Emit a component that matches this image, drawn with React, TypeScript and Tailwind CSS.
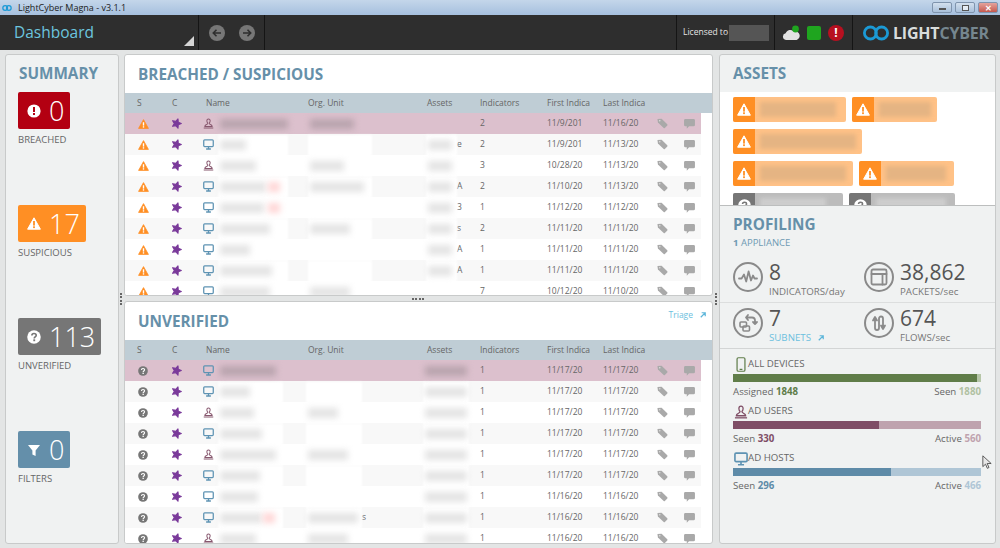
import type { ReactNode } from "react";

type Row = {
  s: "warn" | "q";
  kind: "user" | "host";
  name: number;
  red?: boolean;
  org?: number;
  orgEnd?: string;
  asset?: boolean;
  assetEnd?: string;
  ind: number;
  first: string;
  last: string;
};

const breached: Row[] = [
  { s: "warn", kind: "user", name: 68, org: 44, ind: 2, first: "11/9/201", last: "11/16/20" },
  { s: "warn", kind: "host", name: 26, asset: true, assetEnd: "e", ind: 2, first: "11/9/201", last: "11/13/20" },
  { s: "warn", kind: "user", name: 36, org: 34, asset: true, ind: 3, first: "10/28/20", last: "11/13/20" },
  { s: "warn", kind: "host", name: 46, red: true, org: 54, asset: true, assetEnd: "A", ind: 2, first: "11/10/20", last: "11/13/20" },
  { s: "warn", kind: "host", name: 44, red: true, asset: true, assetEnd: "3", ind: 1, first: "11/12/20", last: "11/12/20" },
  { s: "warn", kind: "host", name: 50, org: 40, asset: true, assetEnd: "s", ind: 2, first: "11/11/20", last: "11/11/20" },
  { s: "warn", kind: "host", name: 30, asset: true, assetEnd: "A", ind: 1, first: "11/11/20", last: "11/11/20" },
  { s: "warn", kind: "host", name: 52, asset: true, assetEnd: "A", ind: 1, first: "11/11/20", last: "11/11/20" },
  { s: "warn", kind: "host", name: 50, org: 40, ind: 7, first: "10/12/20", last: "11/10/20" },
];

const unverified: Row[] = [
  { s: "q", kind: "host", name: 56, asset: true, ind: 1, first: "11/17/20", last: "11/17/20" },
  { s: "q", kind: "host", name: 30, asset: true, ind: 1, first: "11/17/20", last: "11/17/20" },
  { s: "q", kind: "user", name: 34, org: 30, asset: true, ind: 1, first: "11/17/20", last: "11/17/20" },
  { s: "q", kind: "host", name: 42, asset: true, ind: 1, first: "11/17/20", last: "11/17/20" },
  { s: "q", kind: "user", name: 56, org: 40, asset: true, ind: 1, first: "11/17/20", last: "11/17/20" },
  { s: "q", kind: "host", name: 40, asset: true, ind: 1, first: "11/17/20", last: "11/17/20" },
  { s: "q", kind: "host", name: 38, asset: true, ind: 1, first: "11/16/20", last: "11/16/20" },
  { s: "q", kind: "host", name: 42, red: true, org: 50, orgEnd: "s", asset: true, ind: 1, first: "11/16/20", last: "11/16/20" },
  { s: "q", kind: "user", name: 36, org: 40, asset: true, ind: 1, first: "11/16/20", last: "11/16/20" },
];

function WarnIcon() {
  return (
    <svg viewBox="0 0 14 13" className="ml-[1px] h-[10px] w-[11px]">
      <path d="M7 .8 13.4 12.2H.6Z" fill="#ff8f24" stroke="#ff8f24" strokeLinejoin="round" />
      <rect x="6.1" y="4.2" width="1.8" height="4.4" fill="#fff" />
      <rect x="6.1" y="9.4" width="1.8" height="1.8" fill="#fff" />
    </svg>
  );
}

function WhiteWarn({ className }: { className: string }) {
  return (
    <svg viewBox="0 0 14 13" className={className}>
      <path d="M7 .8 13.4 12.2H.6Z" fill="#fff" stroke="#fff" strokeLinejoin="round" />
      <rect x="6.1" y="4" width="1.8" height="4.6" fill="#ff8f24" />
      <rect x="6.1" y="9.3" width="1.8" height="1.8" fill="#ff8f24" />
    </svg>
  );
}

function QuestionIcon({ fill = "#767676", mark = "#fff", className = "ml-[1px] h-[10px] w-[10px]" }: { fill?: string; mark?: string; className?: string }) {
  return (
    <svg viewBox="0 0 12 12" className={className}>
      <circle cx="6" cy="6" r="5.8" fill={fill} />
      <path d="M4.2 4.7C4.2 3.6 5 3 6 3s1.9.6 1.9 1.6c0 1.4-1.7 1.3-1.7 2.6" fill="none" stroke={mark} strokeWidth="1.4" />
      <rect x="5.4" y="8" width="1.6" height="1.6" fill={mark} />
    </svg>
  );
}

function StarIcon() {
  return (
    <svg viewBox="0 0 16 16" className="h-[11px] w-[11px] rotate-[6deg]">
      <polygon
        points="9.46,1.15 10.38,5.86 14.96,7.27 10.77,9.6 10.85,14.4 7.33,11.13 2.8,12.68 4.82,8.33 1.94,4.5 6.7,5.07"
        fill="#7a3a9a"
        stroke="#7a3a9a"
        strokeWidth="1.6"
        strokeLinejoin="round"
      />
    </svg>
  );
}

function PersonIcon({ className = "h-[11px] w-[11px]", color = "#86566d" }: { className?: string; color?: string }) {
  return (
    <svg viewBox="0 0 12 12" className={className} fill="none" stroke={color} strokeWidth="1.1">
      <path d="M6 1C4.8 1 4.2 1.9 4.2 3c0 1.2.4 2 1 2.6 0 .8-.3 1-1.4 1.5C2.6 7.6 2 8.2 2 9.2h8c0-1-.6-1.6-1.8-2.1-1.1-.5-1.4-.7-1.4-1.5.6-.6 1-1.4 1-2.6C7.8 1.9 7.2 1 6 1Z" />
      <path d="M.8 11h10.4" />
    </svg>
  );
}

function MonitorIcon({ className = "h-[11px] w-[11px]", color = "#5e93b3" }: { className?: string; color?: string }) {
  return (
    <svg viewBox="0 0 12 12" className={className} fill="none" stroke={color} strokeWidth="1.4">
      <rect x=".8" y="1" width="10.4" height="7.2" rx="1" />
      <path d="M6 8.2v2.2M3.4 10.9h5.2" />
    </svg>
  );
}

function TagIcon() {
  return (
    <svg viewBox="0 0 12 12" className="h-[11px] w-[11px]">
      <path d="M.5 1.2 5 .8l6.2 6.1a1 1 0 0 1 0 1.3l-2.6 2.6a1 1 0 0 1-1.3 0L1 4.8Z" fill="#a9a9a9" />
      <circle cx="3" cy="3" r=".9" fill="#fff" opacity="0.6" />
    </svg>
  );
}

function CommentIcon() {
  return (
    <svg viewBox="0 0 12 11" className="h-[10px] w-[11px]">
      <path d="M1.5 0h9A1.5 1.5 0 0 1 12 1.5v5A1.5 1.5 0 0 1 10.5 8H5.5L3 10.6V8H1.5A1.5 1.5 0 0 1 0 6.5v-5A1.5 1.5 0 0 1 1.5 0Z" fill="#a9a9a9" />
    </svg>
  );
}

// white column patch that hides a value, with a soft grey trace of the text
function Smudge({ w, inner, pink, red }: { w: number; inner?: number; pink: boolean; red?: boolean }) {
  return (
    <div className="relative h-[21px] shrink-0 translate-y-[1px]" style={{ width: w }}>
      {!pink && <div className="absolute inset-0 bg-white blur-[1px]" />}
      {inner ? (
        <div
          className={`absolute left-[2px] top-[5px] h-[10px] blur-[3px] ${pink ? "bg-[#b9a4ae]" : "bg-[#e4e4e4]"}`}
          style={{ width: inner }}
        />
      ) : null}
      {red && <div className="absolute right-[8px] top-[5px] h-[10px] w-[12px] bg-[#ffd6d6] blur-[3px]" />}
    </div>
  );
}

const gridCols = "grid grid-cols-[35px_34px_102px_119px_53px_67px_56px_53px_28px_17px] pl-[12px]";

function TableHeader() {
  return (
    <div className={`${gridCols} h-[20px] shrink-0 items-center bg-[#bfcdd5] text-[8.5px] text-[#666]`}>
      <span>S</span>
      <span>C</span>
      <span>Name</span>
      <span>Org. Unit</span>
      <span>Assets</span>
      <span>Indicators</span>
      <span className="whitespace-nowrap">First Indica</span>
      <span className="whitespace-nowrap">Last Indica</span>
      <span />
      <span />
    </div>
  );
}

function TableRow({ row, index }: { row: Row; index: number }) {
  const pink = index === 0;
  const bg = pink ? "bg-[#dcc0cd]" : index % 2 === 1 ? "bg-[#f8f8f8]" : "bg-white";
  const lower = row.s === "q";
  return (
    <div className={`${gridCols} ${bg} h-[21px] w-[576px] shrink-0 items-center pb-[2px] text-[8.5px] text-[#666]`}>
      <div className="flex items-center">{row.s === "warn" ? <WarnIcon /> : <QuestionIcon />}</div>
      <div className="-ml-[1px] flex items-center">
        <StarIcon />
      </div>
      <div className="-ml-[3px] flex items-center gap-[4px]">
        {row.kind === "user" ? <PersonIcon /> : <MonitorIcon />}
        <Smudge w={lower ? 65 : 70} inner={row.name} pink={pink} red={row.red} />
      </div>
      <div className={`flex items-center ${lower ? "-ml-[2px]" : ""}`}>
        <Smudge w={lower ? 56 : 64} inner={row.org} pink={pink} />
        {row.orgEnd && <span>{row.orgEnd}</span>}
      </div>
      <div className={`flex items-center ${lower ? "-ml-[4px]" : "-ml-[1px]"}`}>
        {row.asset ? <Smudge w={lower ? 46 : 31} inner={lower ? 42 : 24} pink={pink} /> : null}
        {row.assetEnd && <span>{row.assetEnd}</span>}
      </div>
      <span>{row.ind}</span>
      <span className="whitespace-nowrap">{row.first}</span>
      <span className="whitespace-nowrap">{row.last}</span>
      <div className="flex items-center pl-[1px]">
        <TagIcon />
      </div>
      <div className="flex items-center">
        <CommentIcon />
      </div>
    </div>
  );
}

function TablePanel({ title, rows, action, height }: { title: string; rows: Row[]; action?: ReactNode; height: string }) {
  return (
    <section className={`${height} relative flex flex-col overflow-hidden rounded-[3px] border border-[#c8caca] bg-white`}>
      <div className="flex h-[38px] shrink-0 items-center pl-[13px]">
        <h2 className="text-[15.3px] font-bold text-[#6690a9]">{title}</h2>
      </div>
      {action}
      <TableHeader />
      <div className="flex flex-1 flex-col overflow-hidden">
        {rows.map((r, i) => (
          <TableRow key={i} row={r} index={i} />
        ))}
      </div>
    </section>
  );
}

function SummaryBadge({ icon, value, label, bg }: { icon: ReactNode; value: number; label: string; bg: string }) {
  return (
    <div className="flex flex-col items-start">
      <div className={`${bg} flex h-[37px] items-center gap-[8px] rounded-[2px] pl-[9px] pr-[6px] text-white`}>
        {icon}
        <span className="text-[27px] font-light leading-none">{value}</span>
      </div>
      <span className="mt-[4px] text-[9.5px] leading-[14px] text-[#666]">{label}</span>
    </div>
  );
}

function Chip({ w, smudge, gray }: { w: number; smudge: number; gray?: boolean }) {
  return (
    <div
      className={`flex h-[25px] items-stretch overflow-hidden rounded-[2px] ${gray ? "bg-[#bcbcbc]" : "bg-[#ffc287]"}`}
      style={{ width: w }}
    >
      <div className={`flex w-[22px] shrink-0 items-center justify-center ${gray ? "bg-[#767676]" : "bg-[#ff8f24]"}`}>
        {gray ? (
          <QuestionIcon fill="#fff" mark="#767676" className="h-[13px] w-[13px]" />
        ) : (
          <WhiteWarn className="h-[13px] w-[14px]" />
        )}
      </div>
      <div className="flex items-center pl-[5px]">
        <div className={`h-[15px] blur-[2px] ${gray ? "bg-[#cdcdcd]" : "bg-[#e5b483]"}`} style={{ width: smudge }} />
      </div>
    </div>
  );
}

function Ring({ children }: { children: ReactNode }) {
  return (
    <svg viewBox="0 0 30 30" className="h-[30px] w-[30px] shrink-0" fill="none" stroke="#8a8a8a" strokeWidth="1.8" strokeLinejoin="round" strokeLinecap="round">
      <circle cx="15" cy="15" r="14" strokeWidth="2" />
      {children}
    </svg>
  );
}

function Stat({ icon, value, label, link }: { icon: ReactNode; value: string; label: string; link?: boolean }) {
  return (
    <div className="flex items-start gap-[6px]">
      {icon}
      <div className="flex flex-col">
        <span className="-mt-[3px] text-[21px] leading-[26px] text-[#555]">{value}</span>
        {link ? (
          <span className="flex items-center gap-[7px] text-[9.7px] leading-[13px] text-[#6cc0de]">
            {label}
            <ArrowUpRight />
          </span>
        ) : (
          <span className="text-[9.7px] leading-[13px] text-[#777]">{label}</span>
        )}
      </div>
    </div>
  );
}

function ArrowUpRight() {
  return (
    <svg viewBox="0 0 8 8" className="h-[6px] w-[6px]" fill="none" stroke="#5db6da" strokeWidth="1.6">
      <path d="M1 7 7 1M2.2 1H7v4.8" />
    </svg>
  );
}

function Meter({
  icon,
  title,
  left,
  leftValue,
  right,
  rightValue,
  dark,
  light,
  leftText,
  rightText,
}: {
  icon: ReactNode;
  title: string;
  left: string;
  leftValue: number;
  right: string;
  rightValue: number;
  dark: string;
  light: string;
  leftText: string;
  rightText: string;
}) {
  return (
    <div className="flex flex-col">
      <div className="flex h-[17px] items-center text-[9.7px] text-[#666]">
        <div className="flex w-[15px] justify-center">{icon}</div>
        <span>{title}</span>
      </div>
      <div className={`${light} mt-[1px] h-[8px] w-[248px]`}>
        <div className={`${dark} h-full`} style={{ width: `${(leftValue / rightValue) * 100}%` }} />
      </div>
      <div className="mt-[3px] flex w-[248px] justify-between text-[9.7px] leading-[14px] text-[#666]">
        <span>
          {left} <b className={leftText}>{leftValue}</b>
        </span>
        <span>
          {right} <b className={rightText}>{rightValue}</b>
        </span>
      </div>
    </div>
  );
}

function Logo() {
  return (
    <div className="flex items-center gap-[4px]">
      <svg viewBox="0 0 26 16" className="h-[16px] w-[26px]" fill="none" stroke="#1b9ad6" strokeWidth="2.8">
        <circle cx="7.4" cy="8" r="6" />
        <circle cx="18.6" cy="8" r="6" />
      </svg>
      <span className="text-[16px] font-bold leading-none tracking-[-0.2px]">
        <span className="text-[#d8dcdc]">LIGHT</span>
        <span className="text-[#75868f]">CYBER</span>
      </span>
    </div>
  );
}

function Divider() {
  return <div className="h-full w-px shrink-0 border-l border-[#151515] bg-[#444]" />;
}

function NavArrow({ d }: { d: string }) {
  return (
    <svg viewBox="0 0 16 16" className="h-[16px] w-[16px]">
      <circle cx="8" cy="8" r="8" fill="#777" />
      <path d={d} fill="none" stroke="#2e2e2e" strokeWidth="1.6" />
    </svg>
  );
}

function WinButton({ children, red }: { children: ReactNode; red?: boolean }) {
  return (
    <div
      className={`flex h-[11px] w-[20px] items-center justify-center rounded-[2px] border border-[#7f94ad] ${
        red ? "bg-gradient-to-b from-[#e4a39c] to-[#c4584e]" : "bg-gradient-to-b from-[#d3e0ee] to-[#a9c0da]"
      }`}
    >
      {children}
    </div>
  );
}

export default function App() {
  return (
    <div className="relative flex h-[548px] w-[1000px] flex-col overflow-hidden bg-[#e3e5e5] font-['Open_Sans',sans-serif]">
      {/* Window title bar */}
      <div className="flex h-[15px] shrink-0 items-center justify-between bg-gradient-to-b from-[#c4d6ea] to-[#a6c0de] pl-[2px] pr-[2px]">
        <div className="flex items-center gap-[6px]">
          <svg viewBox="0 0 12 8" className="h-[8px] w-[10px]" fill="none" stroke="#1b9ad6" strokeWidth="1.5">
            <circle cx="3.8" cy="4" r="2.8" />
            <circle cx="8.2" cy="4" r="2.8" />
          </svg>
          <span className="text-[9px] leading-none text-[#222]">LightCyber Magna - v3.1.1</span>
        </div>
        <div className="flex items-center gap-[3px]">
          <WinButton>
            <div className="mt-[3px] h-[2px] w-[7px] border border-[#555] bg-white" />
          </WinButton>
          <WinButton>
            <div className="h-[6px] w-[7px] border border-[#555] bg-white/60" />
          </WinButton>
          <WinButton red>
            <span className="text-[8px] font-bold leading-none text-white">✕</span>
          </WinButton>
        </div>
      </div>

      {/* App header */}
      <header className="flex h-[35px] shrink-0 items-center bg-[#2e2e2e]">
        <div className="relative flex h-full w-[198px] items-center pl-[14px]">
          <span className="text-[15.5px] leading-none text-[#6cc5df]">Dashboard</span>
          <div className="absolute bottom-[4px] right-[4px] h-0 w-0 border-b-[10px] border-l-[10px] border-b-[#d5d5d5] border-l-transparent" />
        </div>
        <Divider />
        <div className="flex w-[65px] items-center justify-center gap-[14px] pl-[1px]">
          <NavArrow d="M12 8H4.5M7.5 4.8 4.3 8l3.2 3.2" />
          <NavArrow d="M4 8h7.5M8.5 4.8 11.7 8l-3.2 3.2" />
        </div>
        <Divider />
        <div className="flex-1" />
        <Divider />
        <div className="flex w-[97px] items-center pl-[6px]">
          <span className="whitespace-nowrap text-[8.5px] text-[#e4e4e4]">Licensed to</span>
          <div className="ml-[1px] h-[16px] w-[40px] bg-[#555] blur-[0.5px]" />
        </div>
        <Divider />
        <div className="flex w-[77px] items-center gap-[7px] pl-[7px]">
          <svg viewBox="0 0 18 16" className="h-[16px] w-[18px] shrink-0">
            <path d="M4 15a3.4 3.4 0 0 1-.4-6.7A5 5 0 0 1 12 6.6a4 4 0 0 1 2.6 8.4Z" fill="#e2e2e2" />
            <circle cx="13.5" cy="4" r="3.4" fill="#1fa51f" />
          </svg>
          <div className="h-[14px] w-[14px] shrink-0 rounded-[2px] bg-[#1fa51f]" />
          <div className="flex h-[16px] w-[16px] shrink-0 items-center justify-center rounded-full bg-[#b81020] text-[12px] font-bold leading-none text-white">
            !
          </div>
        </div>
        <Divider />
        <div className="flex w-[147px] pl-[10px]">
          <Logo />
        </div>
      </header>

      {/* Main */}
      <main className="relative flex flex-1 gap-[5px] pb-[4px] pl-[5px] pr-[4px] pt-[4px]">
        <aside className="flex w-[114px] shrink-0 flex-col rounded-[3px] border border-[#c8caca] bg-[#f0f2f2] pl-[12px]">
          <h2 className="mt-[8px] h-[29px] pl-[1px] text-[15.3px] font-bold leading-[21px] text-[#6690a9]">SUMMARY</h2>
          <div className="flex flex-col gap-[58px]">
            <SummaryBadge bg="bg-[#b30012]" label="BREACHED" value={0} icon={<AlertDisc />} />
            <SummaryBadge bg="bg-[#ff8f24]" label="SUSPICIOUS" value={17} icon={<WhiteWarn className="h-[13px] w-[14px]" />} />
            <SummaryBadge
              bg="bg-[#767676]"
              label="UNVERIFIED"
              value={113}
              icon={<QuestionIcon fill="#fff" mark="#767676" className="h-[14px] w-[14px]" />}
            />
            <SummaryBadge
              bg="bg-[#648faa]"
              label="FILTERS"
              value={0}
              icon={
                <svg viewBox="0 0 14 14" className="h-[14px] w-[14px]">
                  <path d="M1 2h12L8.6 7.5V13l-3.2-1.6V7.5Z" fill="#fff" />
                </svg>
              }
            />
          </div>
        </aside>

        <div className="flex w-[589px] shrink-0 flex-col gap-[5px]">
          <TablePanel title="BREACHED / SUSPICIOUS" rows={breached} height="h-[242px]" />
          <TablePanel
            title="UNVERIFIED"
            rows={unverified}
            height="h-[243px]"
            action={
              <div className="absolute right-[6px] top-[7px] flex items-center gap-[7px] text-[8.5px] leading-[12px] text-[#6cc0de]">
                Triage
                <ArrowUpRight />
              </div>
            }
          />
        </div>

        <aside className="ml-[1px] flex w-[277px] shrink-0 flex-col overflow-hidden rounded-[3px] border border-[#c8caca] bg-[#f0f2f2]">
          <div className="flex h-[37px] shrink-0 items-center pl-[13px]">
            <h2 className="text-[15.3px] font-bold text-[#6690a9]">ASSETS</h2>
          </div>
          <div className="flex h-[113px] shrink-0 flex-col gap-[7px] overflow-hidden bg-white pl-[13px] pt-[5px]">
            <div className="flex gap-[6px]">
              <Chip w={113} smudge={76} />
              <Chip w={85} smudge={52} />
            </div>
            <div className="flex gap-[6px]">
              <Chip w={129} smudge={96} />
            </div>
            <div className="flex gap-[6px]">
              <Chip w={120} smudge={86} />
              <Chip w={95} smudge={60} />
            </div>
            <div className="flex gap-[6px]">
              <Chip w={110} smudge={66} gray />
              <Chip w={106} smudge={70} gray />
            </div>
          </div>
          <div className="flex flex-1 flex-col border-t border-[#bcbebe] pl-[13px]">
            <h2 className="mt-[8px] text-[15.3px] font-bold leading-[21px] text-[#6690a9]">PROFILING</h2>
            <p className="mt-[1px] text-[9.5px] leading-[14px] text-[#6f9ab3]">
              <b>1</b> APPLIANCE
            </p>
            <div className="-ml-[13px] mt-[12px] grid h-[41px] grid-cols-[131px_1fr] border-b border-[#dcdede] pl-[13px]">
              <Stat
                value="8"
                label="INDICATORS/day"
                icon={
                  <Ring>
                    <path d="M6 16.5h2.6l2.4-4 2.2 7 2.4-10 2.4 9 2-5 1.5 3H24" />
                  </Ring>
                }
              />
              <Stat
                value="38,862"
                label="PACKETS/sec"
                icon={
                  <Ring>
                    <rect x="7.5" y="7.5" width="15" height="15" rx="1.5" />
                    <path d="M7.5 12h15M18.5 12v10.5" />
                  </Ring>
                }
              />
            </div>
            <div className="-ml-[13px] grid h-[46px] grid-cols-[131px_1fr] border-b border-[#d3d5d5] pl-[13px] pt-[5px]">
              <Stat
                value="7"
                label="SUBNETS"
                link
                icon={
                  <Ring>
                    <rect x="7" y="14" width="6.5" height="5" rx="1" strokeWidth="1.6" />
                    <rect x="10" y="18" width="6.5" height="5" rx="1" strokeWidth="1.6" />
                    <path d="M13 9.5h6a3 3 0 0 1 3 3v3M20 14l2 2 2-2M15 7l-2 2.5 2 2.5" />
                  </Ring>
                }
              />
              <Stat
                value="674"
                label="FLOWS/sec"
                icon={
                  <Ring>
                    <path d="M9 12.5 11 9l2 3.5M11 9.5V20a2 2 0 0 0 4 0v-9.5a2 2 0 0 1 4 0V20M17 17.5l2 3.5 2-3.5" />
                  </Ring>
                }
              />
            </div>
            <div className="mt-[7px] flex flex-col gap-[4px]">
              <Meter
                title="ALL DEVICES"
                icon={
                  <svg viewBox="0 0 10 16" className="h-[15px] w-[10px]" fill="none" stroke="#5f7d4a" strokeWidth="1.3">
                    <rect x=".8" y=".8" width="8.4" height="14.4" rx="1.4" />
                    <path d="M3.5 13.2h3" />
                  </svg>
                }
                left="Assigned"
                leftValue={1848}
                right="Seen"
                rightValue={1880}
                dark="bg-[#607d49]"
                light="bg-[#b6c6a8]"
                leftText="text-[#607d49]"
                rightText="text-[#b0c1a2]"
              />
              <Meter
                title="AD USERS"
                icon={<PersonIcon className="h-[14px] w-[14px]" color="#7f4e66" />}
                left="Seen"
                leftValue={330}
                right="Active"
                rightValue={560}
                dark="bg-[#7f4e66]"
                light="bg-[#bfa3ae]"
                leftText="text-[#7f4e66]"
                rightText="text-[#bfa3ae]"
              />
              <Meter
                title="AD HOSTS"
                icon={<MonitorIcon className="h-[14px] w-[14px]" />}
                left="Seen"
                leftValue={296}
                right="Active"
                rightValue={466}
                dark="bg-[#5e8ba8]"
                light="bg-[#afc6d6]"
                leftText="text-[#5e8ba8]"
                rightText="text-[#afc6d6]"
              />
            </div>
          </div>
        </aside>

        {/* splitter grips */}
        <div className="absolute left-[120px] top-[243px] h-[12px] w-[2px] border-l-2 border-dotted border-[#666]" />
        <div className="absolute left-[412px] top-[248px] h-[2px] w-[12px] border-t-2 border-dotted border-[#666]" />
        <div className="absolute left-[715px] top-[243px] h-[12px] w-[2px] border-l-2 border-dotted border-[#666]" />

        {/* mouse pointer */}
        <svg viewBox="0 0 12 18" className="absolute left-[982px] top-[405px] h-[15px] w-[10px]">
          <path d="M1 1v13l3.2-3 2.2 5 2-1-2.2-4.8H11Z" fill="#e8e8e8" stroke="#444" strokeWidth="1" />
        </svg>
      </main>
    </div>
  );
}

function AlertDisc() {
  return (
    <svg viewBox="0 0 14 14" className="h-[14px] w-[14px]">
      <circle cx="7" cy="7" r="6.6" fill="#fff" />
      <rect x="6" y="3" width="2" height="5" fill="#b30012" />
      <rect x="6" y="9" width="2" height="2" fill="#b30012" />
    </svg>
  );
}
